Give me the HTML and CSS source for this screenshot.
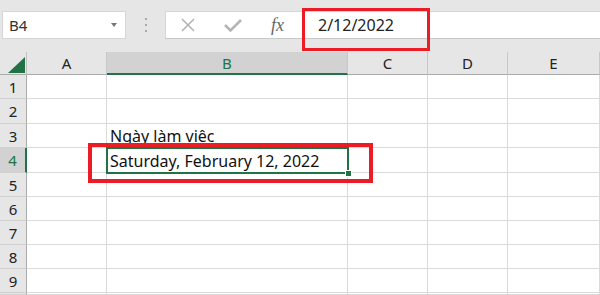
FILE: index.html
```html
<!DOCTYPE html>
<html lang="vi">
<head>
    <meta charset="UTF-8">
    <title>Excel - B4</title>
    <link rel="stylesheet" href="styles.css">
</head>
<body>
    <div id="toolbar">
        <div id="name-box">
            <span>B4</span>
            <span class="drop-arrow"></span>
        </div>
        <div id="grip">
            <span></span><span></span><span></span>
        </div>
        <div id="formula-bar">
            <div id="formula-buttons">
                <svg class="fx-btn" width="16" height="16" viewBox="0 0 16 16">
                    <path d="M2 2 L14 14 M14 2 L2 14" stroke="#b4b4b4" stroke-width="1.6" fill="none"/>
                </svg>
                <svg class="fx-btn" width="18" height="16" viewBox="0 0 18 16">
                    <path d="M1 8 L6.5 13.5 L17 3" stroke="#b4b4b4" stroke-width="2.6" fill="none"/>
                </svg>
                <span id="fx">fx</span>
            </div>
            <div id="formula-text">2/12/2022</div>
        </div>
    </div>

    <div id="sheet">
        <div class="corner">
            <svg width="27" height="23" viewBox="0 0 27 23">
                <polygon points="8,21 25,21 25,5" fill="#217346"/>
            </svg>
        </div>
        <div class="col-head">A</div>
        <div class="col-head selected">B</div>
        <div class="col-head">C</div>
        <div class="col-head">D</div>
        <div class="col-head">E</div>

        <div class="row-head">1</div><div class="cell"></div><div class="cell"></div><div class="cell"></div><div class="cell"></div><div class="cell"></div>
        <div class="row-head">2</div><div class="cell"></div><div class="cell"></div><div class="cell"></div><div class="cell"></div><div class="cell"></div>
        <div class="row-head">3</div><div class="cell"></div><div class="cell">Ngày làm việc</div><div class="cell"></div><div class="cell"></div><div class="cell"></div>
        <div class="row-head selected">4</div><div class="cell"></div><div class="cell">Saturday, February 12, 2022</div><div class="cell"></div><div class="cell"></div><div class="cell"></div>
        <div class="row-head">5</div><div class="cell"></div><div class="cell"></div><div class="cell"></div><div class="cell"></div><div class="cell"></div>
        <div class="row-head">6</div><div class="cell"></div><div class="cell"></div><div class="cell"></div><div class="cell"></div><div class="cell"></div>
        <div class="row-head">7</div><div class="cell"></div><div class="cell"></div><div class="cell"></div><div class="cell"></div><div class="cell"></div>
        <div class="row-head">8</div><div class="cell"></div><div class="cell"></div><div class="cell"></div><div class="cell"></div><div class="cell"></div>
        <div class="row-head">9</div><div class="cell"></div><div class="cell"></div><div class="cell"></div><div class="cell"></div><div class="cell"></div>
        <div class="row-head"></div><div class="cell"></div><div class="cell"></div><div class="cell"></div><div class="cell"></div><div class="cell"></div>

        <!-- active cell B4 -->
        <div id="active-cell"><span class="fill-handle"></span></div>
    </div>

    <!-- red highlight marks -->
    <div class="mark mark-formula"></div>
    <div class="mark mark-cell"></div>
</body>
</html>
```

FILE: styles.css
```css
body {
    margin: 0;
    padding: 0;
    background-color: #e6e6e6;
    font-family: 'Noto Sans', 'Open Sans', sans-serif;
    color: #222;
    overflow: hidden;
    height: 295px;
}
#toolbar {
    display: flex;
    align-items: center;
    height: 52px;
    padding-left: 2px;
    box-sizing: border-box;
    padding-bottom: 2px;
}
#name-box {
    display: flex;
    align-items: center;
    justify-content: space-between;
    width: 124px;
    height: 28px;
    box-sizing: border-box;
    background-color: #fff;
    border: 1px solid #d6d6d6;
    padding: 0 8px 0 6px;
    font-size: 15px;
    color: #333;
}
.drop-arrow {
    width: 0;
    height: 0;
    border-left: 3.5px solid transparent;
    border-right: 3.5px solid transparent;
    border-top: 4px solid #777;
}
#grip {
    width: 39px;
    display: flex;
    flex-direction: column;
    align-items: center;
    gap: 4px;
}
#grip span {
    width: 2px;
    height: 2px;
    background-color: #a8a8a8;
}
#formula-bar {
    flex: 1;
    display: flex;
    align-items: center;
    height: 28px;
    background-color: #fff;
    border-top: 1px solid #d6d6d6;
    border-bottom: 1px solid #c8c8c8;
    border-left: 1px solid #d6d6d6;
    box-sizing: border-box;
}
#formula-buttons {
    display: flex;
    align-items: center;
    gap: 28px;
    padding-left: 14px;
    width: 136px;
    box-sizing: border-box;
}
#fx {
    font-family: 'Liberation Serif', serif;
    font-style: italic;
    font-size: 18px;
    color: #666;
    margin-left: 1px;
}
#formula-text {
    font-size: 16px;
    padding-left: 16px;
    color: #222;
}

#sheet {
    position: relative;
    display: grid;
    grid-template-columns: 27px 80px 241px 80px 80px 1fr;
    grid-template-rows: 23px 24px 25px 24px 25px 24px 24px 24px 24px 24px 2px;
    background-color: #fff;
}
.corner {
    background-color: #e6e6e6;
    border-right: 1px solid #c0c0c0;
    border-bottom: 1px solid #ababab;
    box-sizing: border-box;
}
.corner svg {
    display: block;
}
.col-head {
    display: flex;
    align-items: center;
    justify-content: center;
    background-color: #e6e6e6;
    border-right: 1px solid #c8c8c8;
    border-bottom: 1px solid #ababab;
    box-sizing: border-box;
    font-size: 15px;
    color: #222;
}
.col-head.selected {
    background-color: #d2d2d2;
    color: #217346;
    border-bottom: 2px solid #217346;
}
.row-head {
    display: flex;
    align-items: center;
    justify-content: center;
    background-color: #e6e6e6;
    border-right: 1px solid #ababab;
    border-bottom: 1px solid #d0d0d0;
    box-sizing: border-box;
    font-size: 15px;
    color: #222;
}
.row-head.selected {
    background-color: #d2d2d2;
    color: #217346;
    border-right: 2px solid #217346;
}
.cell {
    display: flex;
    align-items: flex-end;
    padding: 0 0 0 3px;
    border-right: 1px solid #dadada;
    border-bottom: 1px solid #dadada;
    box-sizing: border-box;
    font-size: 16px;
    color: #111;
    white-space: nowrap;
}
#active-cell {
    position: absolute;
    left: 106px;
    top: 95px;
    width: 243px;
    height: 27px;
    border: 2px solid #217346;
    box-sizing: border-box;
}
.fill-handle {
    position: absolute;
    right: -5px;
    bottom: -5px;
    width: 5px;
    height: 5px;
    background-color: #217346;
    border: 1px solid #fff;
}
.mark {
    position: absolute;
    border: 4px solid #ec1c24;
    box-sizing: border-box;
}
.mark-formula {
    left: 302px;
    top: 8px;
    width: 128px;
    height: 43px;
    border-width: 3px;
}
.mark-cell {
    left: 88px;
    top: 143px;
    width: 285px;
    height: 40px;
}
```
